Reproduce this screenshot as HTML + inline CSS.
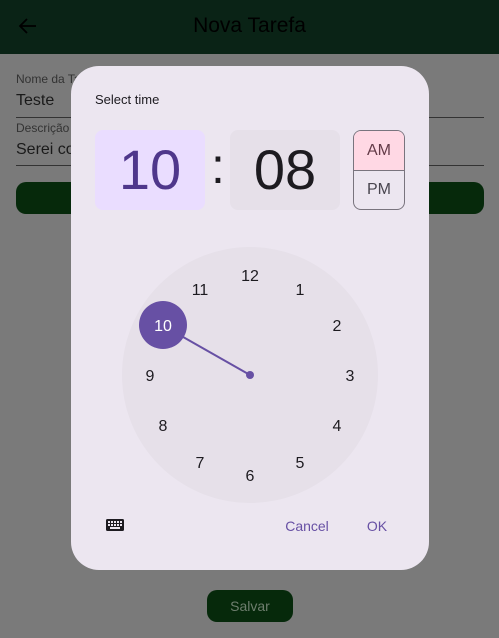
<!DOCTYPE html>
<html><head><style>
body{margin:0;width:499px;height:638px;background:#7a7a7a;font-family:"Liberation Sans",sans-serif;position:relative;overflow:hidden}
.a{position:absolute}
</style></head><body>
<div class="a" style="left:0;top:0;width:499px;height:54px;background:#0a2316"></div>
<svg class="a" style="left:16px;top:14px" width="24" height="24" viewBox="0 0 24 24"><path d="M20 12H5M11 5l-7 7 7 7" stroke="#000" stroke-width="1.8" fill="none"/></svg>
<div class="a" style="left:0;width:499px;top:14px;text-align:center;font-size:21px;color:#000">Nova Tarefa</div>
<div class="a" style="left:16px;top:72px;font-size:12px;color:#333">Nome da Tarefa</div>
<div class="a" style="left:16px;top:92px;font-size:16px;color:#1a1a1a">Teste</div>
<div class="a" style="left:16px;top:117px;width:468px;height:1px;background:#333"></div>
<div class="a" style="left:16px;top:121px;font-size:12px;color:#333">Descrição</div>
<div class="a" style="left:16px;top:141px;font-size:16px;color:#1a1a1a">Serei co</div>
<div class="a" style="left:16px;top:165px;width:468px;height:1px;background:#333"></div>
<div class="a" style="left:16px;top:182px;width:468px;height:32px;border-radius:10px;background:#06290b"></div>
<div class="a" style="left:207px;top:590px;width:86px;height:32px;border-radius:10px;background:#06290b;color:#6e7e6e;font-size:14px;text-align:center;line-height:32px">Salvar</div>
<div class="a" style="left:71px;top:66px;width:358px;height:504px;border-radius:28px;background:#ece6f0"></div>
<div class="a" style="left:95px;top:92px;font-size:13px;color:#1d1b20">Select time</div>
<div class="a" style="left:95px;top:130px;width:110px;height:80px;border-radius:8px;background:#eaddff;color:#4f378b;font-size:56px;text-align:center;line-height:80px">10</div>
<div class="a" style="left:209px;top:130px;width:18px;text-align:center;font-size:50px;line-height:72px;color:#1d1b20">:</div>
<div class="a" style="left:230px;top:130px;width:110px;height:80px;border-radius:8px;background:#e6e0e9;color:#1d1b20;font-size:56px;text-align:center;line-height:80px">08</div>
<div class="a" style="left:353px;top:130px;width:50px;height:78px;border:1px solid #79747e;border-radius:8px;overflow:hidden">
<div style="height:39px;background:#ffd8e4;color:#633b48;font-size:16px;text-align:center;line-height:39px;border-bottom:1px solid #79747e">AM</div>
<div style="height:38px;color:#49454f;font-size:16px;text-align:center;line-height:38px">PM</div></div>
<svg class="a" style="left:0;top:0" width="499" height="638">
<circle cx="250" cy="375" r="128" fill="#e6e0e9"/>
<line x1="250" y1="375" x2="162" y2="325" stroke="#6750a4" stroke-width="2"/>
<circle cx="250" cy="375" r="4" fill="#6750a4"/>
<circle cx="163" cy="325" r="24" fill="#6750a4"/>
<g font-family="Liberation Sans" font-size="16" fill="#1d1b20" text-anchor="middle">
<text x="250" y="281">12</text><text x="300" y="295">1</text><text x="337" y="331">2</text><text x="350" y="381">3</text><text x="337" y="431">4</text><text x="300" y="468">5</text><text x="250" y="481">6</text><text x="200" y="468">7</text><text x="163" y="431">8</text><text x="150" y="381">9</text><text x="200" y="295">11</text>
<text x="163" y="331" fill="#fff">10</text></g>
<rect x="106" y="519" width="18" height="12" rx="1.5" fill="#1d1b20"/>
<g fill="#ece6f0"><rect x="108" y="521" width="2" height="2"/><rect x="111" y="521" width="2" height="2"/><rect x="114" y="521" width="2" height="2"/><rect x="117" y="521" width="2" height="2"/><rect x="120" y="521" width="2" height="2"/><rect x="108" y="524" width="2" height="2"/><rect x="111" y="524" width="2" height="2"/><rect x="114" y="524" width="2" height="2"/><rect x="117" y="524" width="2" height="2"/><rect x="120" y="524" width="2" height="2"/><rect x="110" y="527" width="10" height="2"/></g>
<g font-family="Liberation Sans" font-size="14" fill="#6750a4" text-anchor="middle"><text x="307" y="531">Cancel</text><text x="377" y="531">OK</text></g>
</svg>
</body></html>
